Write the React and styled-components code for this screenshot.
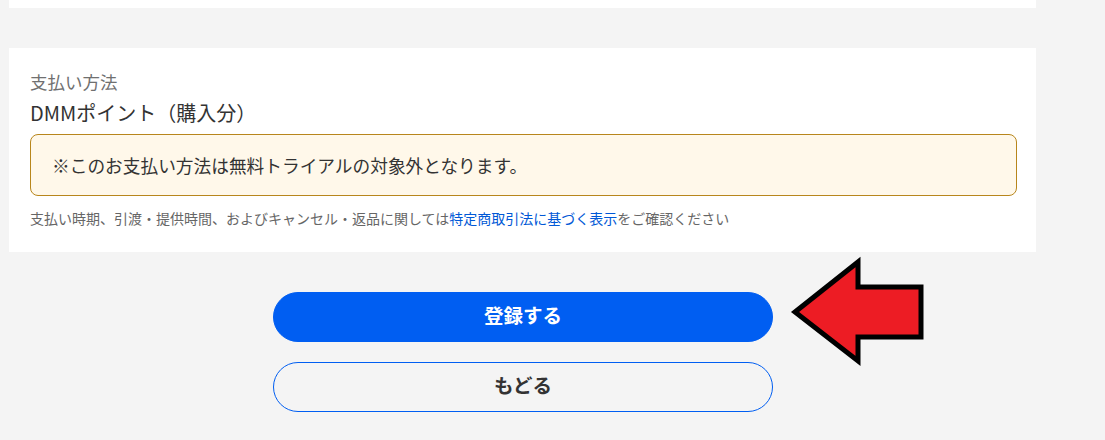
import React from 'react';
import styled, { createGlobalStyle } from 'styled-components';

const GlobalStyle = createGlobalStyle`
  html, body {
    margin: 0;
    padding: 0;
    background: #f4f4f4;
  }
  body {
    font-family: "Noto Sans CJK JP", "Noto Sans", sans-serif;
    color: #333;
  }
`;

const Page = styled.div`
  position: relative;
  width: 1105px;
  height: 440px;
  overflow: hidden;
`;

const Column = styled.div`
  width: 1027px;
  margin-left: 9px;
  display: flex;
  flex-direction: column;
`;

const PrevCard = styled.div`
  height: 8px;
  background: #fff;
`;

const Card = styled.section`
  margin-top: 40px;
  background: #fff;
  padding: 22px 21px 24px;
  display: flex;
  flex-direction: column;
`;

const Label = styled.div`
  font-size: 17.5px;
  line-height: 24px;
  color: #707070;
`;

const Method = styled.div`
  margin-top: 6px;
  font-size: 20px;
  line-height: 26px;
  color: #333;
`;

const Notice = styled.div`
  margin-top: 8px;
  width: 987px;
  box-sizing: border-box;
  padding: 18px 21px;
  background: #fff8ea;
  border: 1px solid #b8861c;
  border-radius: 8px;
  font-size: 17.7px;
  line-height: 24px;
  color: #333;
`;

const Note = styled.p`
  margin: 12px 0 0;
  font-size: 14px;
  line-height: 20px;
  color: #666;
`;

const NoteLink = styled.a`
  color: #0058d6;
  text-decoration: none;
`;

const Actions = styled.div`
  margin-top: 40px;
  display: flex;
  flex-direction: column;
  align-items: center;
  gap: 20px;
  width: 1046px;
`;

const Button = styled.button`
  width: 500px;
  height: 50px;
  padding: 0 0 5px;
  border-radius: 25px;
  box-sizing: border-box;
  font-family: inherit;
  font-size: 19.5px;
  font-weight: 700;
  cursor: pointer;
  border: 1px solid #005ef2;
  background: ${p => (p.primary ? '#005ef2' : 'transparent')};
  color: ${p => (p.primary ? '#fff' : '#333')};
`;

const Arrow = styled.svg`
  position: absolute;
  left: 788px;
  top: 255px;
`;

const PointerArrow = () => (
  <Arrow width="140" height="113" viewBox="0 0 140 113">
    <polygon
      points="7,57 70,7 70,32 133,32 133,82 70,82 70,106"
      fill="#ed1c24"
      stroke="#000"
      strokeWidth="5"
      strokeLinejoin="miter"
    />
  </Arrow>
);

const App = () => (
  <Page>
    <GlobalStyle />
    <Column>
      <PrevCard />
      <Card>
        <Label>支払い方法</Label>
        <Method>DMMポイント（購入分）</Method>
        <Notice>※このお支払い方法は無料トライアルの対象外となります。</Notice>
        <Note>
          支払い時期、引渡・提供時間、およびキャンセル・返品に関しては
          <NoteLink href="#">特定商取引法に基づく表示</NoteLink>
          をご確認ください
        </Note>
      </Card>
    </Column>
    <Actions>
      <Button primary>登録する</Button>
      <Button>もどる</Button>
    </Actions>
    <PointerArrow />
  </Page>
);

export default App;
